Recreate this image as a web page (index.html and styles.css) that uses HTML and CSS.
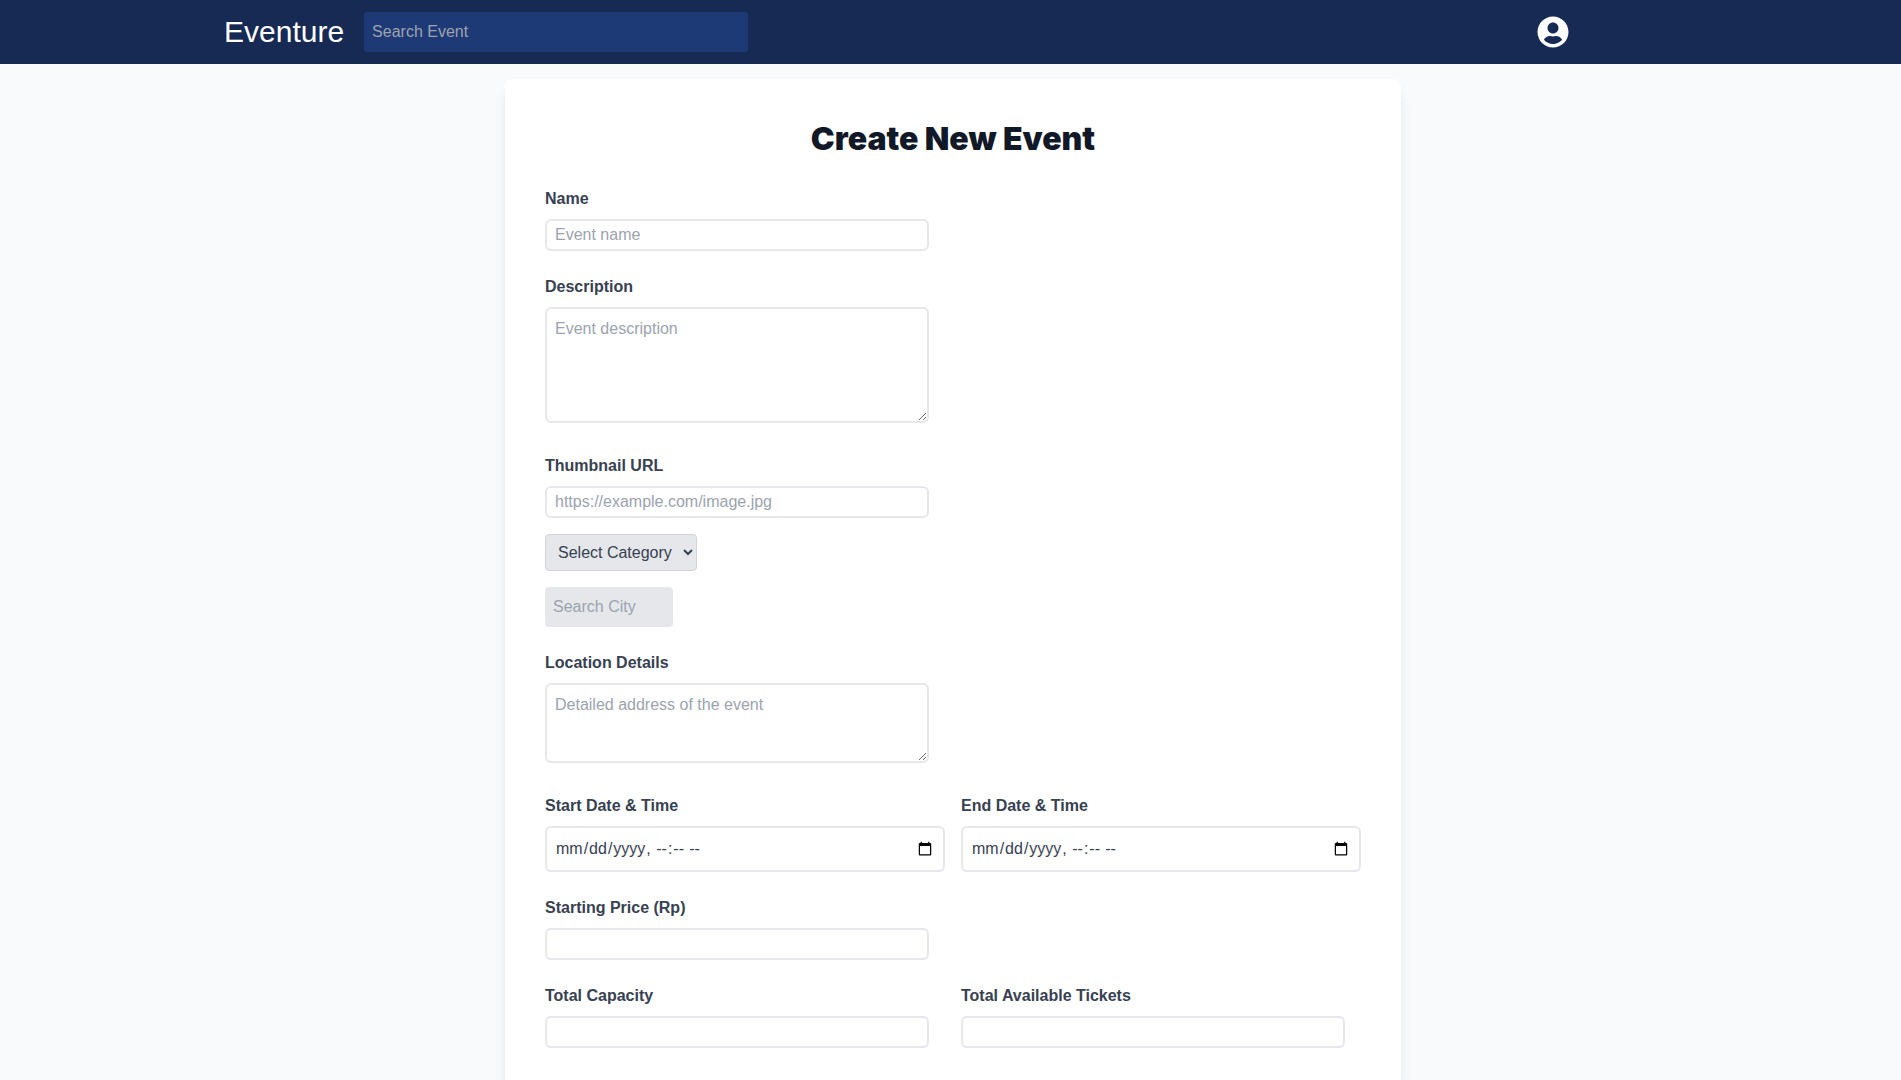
FILE: index.html
```html
<!DOCTYPE html>
<html lang="en">
<head>
<meta charset="utf-8">
<meta name="viewport" content="width=device-width, initial-scale=1">
<title>Eventure</title>
<link rel="stylesheet" href="styles.css">
</head>
<body>
<header class="navbar">
  <a class="brand" href="#">Eventure</a>
  <input class="nav-search" type="search" placeholder="Search Event" aria-label="Search Event">
  <button class="avatar" type="button" aria-label="Account">
    <svg viewBox="0 0 496 512" width="32" height="32" fill="currentColor" aria-hidden="true"><path d="M248 8C111 8 0 119 0 256s111 248 248 248 248-111 248-248S385 8 248 8zm0 96c48.600 0 88 39.400 88 88s-39.400 88-88 88-88-39.400-88-88 39.400-88 88-88zm0 344c-58.700 0-111.300-26.600-146.500-68.200 18.800-35.400 55.600-59.800 98.500-59.800 2.400 0 4.800.4 7.100 1.100 13 4.200 26.600 6.900 40.900 6.900 14.300 0 28-2.700 40.900-6.900 2.300-.7 4.700-1.100 7.100-1.100 42.900 0 79.700 24.400 98.500 59.800C359.300 421.400 306.700 448 248 448z"/></svg>
  </button>
</header>
<main class="page">
  <form class="card">
    <h1 class="title">Create New Event</h1>
    <div class="field">
      <label class="label" for="name">Name</label>
      <input class="control" id="name" type="text" placeholder="Event name">
    </div>
    <div class="field">
      <label class="label" for="description">Description</label>
      <div class="area"><textarea class="control tall" id="description" placeholder="Event description"></textarea></div>
    </div>
    <div class="field">
      <label class="label" for="thumbnail">Thumbnail URL</label>
      <input class="control" id="thumbnail" type="text" placeholder="https://example.com/image.jpg">
    </div>
    <div class="pickers">
      <select class="category" aria-label="Category"><option>Select Category</option></select>
      <input class="city" type="text" placeholder="Search City" aria-label="Search City">
    </div>
    <div class="field">
      <label class="label" for="location">Location Details</label>
      <div class="area"><textarea class="control short" id="location" placeholder="Detailed address of the event"></textarea></div>
    </div>
    <div class="columns">
      <div class="field">
        <label class="label" for="start">Start Date &amp; Time</label>
        <input class="control date" id="start" type="datetime-local">
      </div>
      <div class="field">
        <label class="label" for="end">End Date &amp; Time</label>
        <input class="control date" id="end" type="datetime-local">
      </div>
    </div>
    <div class="field">
      <label class="label" for="price">Starting Price (Rp)</label>
      <input class="control" id="price" type="number">
    </div>
    <div class="columns">
      <div class="field">
        <label class="label" for="capacity">Total Capacity</label>
        <input class="control" id="capacity" type="number">
      </div>
      <div class="field">
        <label class="label" for="tickets">Total Available Tickets</label>
        <input class="control" id="tickets" type="number">
      </div>
    </div>
  </form>
</main>
</body>
</html>
```
FILE: styles.css
```css
*, *::before, *::after { box-sizing: border-box; }
body {
  margin: 0;
  background: #f9fafc;
  color: #374151;
  font: 16px/24px "Liberation Sans", Arial, sans-serif;
}
input, textarea, select, button { margin: 0; font: inherit; color: inherit; }
::placeholder { color: #9ca3af; opacity: 1; }

.navbar {
  display: flex;
  align-items: center;
  gap: 20px;
  height: 64px;
  padding: 0 332px 0 224px;
  background: #172a54;
}
.brand { color: #fff; font-size: 30px; line-height: 36px; text-decoration: none; }
.nav-search {
  width: 384px;
  height: 40px;
  padding: 8px;
  border: 0;
  border-radius: 4px;
  background: #1e3a76;
  color: #fff;
  appearance: none;
}
.avatar {
  width: 32px;
  height: 32px;
  margin-left: auto;
  padding: 0;
  border: 0;
  background: none;
  color: #fff;
}
.avatar svg { display: block; }

.page { padding: 15px 0 16px 5px; }
.card {
  max-width: 896px;
  margin: 0 auto;
  padding: 40px;
  border-radius: 8px;
  background: #fff;
  box-shadow: 0 10px 15px -3px rgba(0, 0, 0, .1), 0 4px 6px -4px rgba(0, 0, 0, .1);
}
.title {
  margin: 0 0 28px;
  color: #111827;
  font-family: "Arial Black", Inter, sans-serif;
  font-size: 32px;
  font-weight: 900;
  line-height: 40px;
  text-align: center;
}
.field { margin-bottom: 24px; }
.label { display: block; margin-bottom: 8px; font-weight: 700; }
.control {
  display: block;
  width: 384px;
  max-width: 100%;
  height: 32px;
  padding: 0 8px;
  border: 2px solid #e5e7eb;
  border-radius: 6px;
  background: #fff;
}
.area { padding-bottom: 7px; }
.tall, .short { padding: 8px; }
.tall { height: 116px; }
.short { height: 80px; }
.date { width: 100%; height: 46px; padding: 8px; }
.pickers {
  display: flex;
  flex-direction: column;
  align-items: flex-start;
  gap: 16px;
  margin: -8px 0 24px;
}
.category {
  width: 152px;
  height: 37px;
  padding: 0 8px;
  border: 1px solid #d1d5db;
  border-radius: 4px;
  background: #e5e7eb;
}
.city {
  width: 128px;
  height: 40px;
  padding: 8px;
  border: 0;
  border-radius: 4px;
  background: #e5e7eb;
}
.columns { display: grid; grid-template-columns: 1fr 1fr; gap: 16px; }
.columns:last-child .field { margin-bottom: 0; }
```
